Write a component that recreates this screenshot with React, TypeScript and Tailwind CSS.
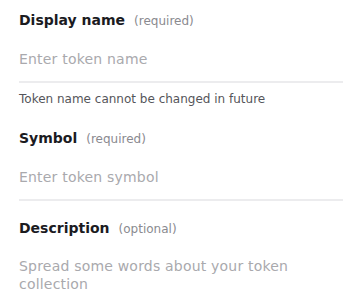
import React from 'react';

const font = { fontFamily: '"DejaVu Sans", "Noto Sans", sans-serif' };

const Label: React.FC<{ title: string; note: string }> = ({ title, note }) => (
  <div className="flex items-baseline">
    <span className="text-[14px] leading-5 font-bold text-[#1b1b1f]">{title}</span>
    <span className="ml-[9px] text-[12px] text-[#8a8a8f]">{note}</span>
  </div>
);

export default function App() {
  return (
    <div className="w-[354px] h-[308px] bg-white pl-[19px] pr-[11px] pt-[10px]" style={font}>
      {/* Display name */}
      <Label title="Display name" note="(required)" />
      <input
        type="text"
        placeholder="Enter token name"
        className="mt-[19px] w-full border-b-2 border-[#ececee] pb-[12px] text-[14px] leading-5 tracking-[0.2px] outline-none placeholder:text-[#a9a9ad]"
      />
      <p className="mt-[8px] text-[12px] leading-4 text-[#55555a]">Token name cannot be changed in future</p>

      {/* Symbol */}
      <div className="mt-[21px]">
        <Label title="Symbol" note="(required)" />
      </div>
      <input
        type="text"
        placeholder="Enter token symbol"
        className="mt-[19px] w-full border-b-2 border-[#ececee] pb-[12px] text-[14px] leading-5 tracking-[0.2px] outline-none placeholder:text-[#a9a9ad]"
      />

      {/* Description */}
      <div className="mt-[17px]">
        <Label title="Description" note="(optional)" />
      </div>
      <textarea
        rows={2}
        placeholder="Spread some words about your token collection"
        className="mt-[19px] w-full resize-none text-[14px] leading-[18px] tracking-[0.2px] outline-none placeholder:text-[#a9a9ad]"
      />
    </div>
  );
}
